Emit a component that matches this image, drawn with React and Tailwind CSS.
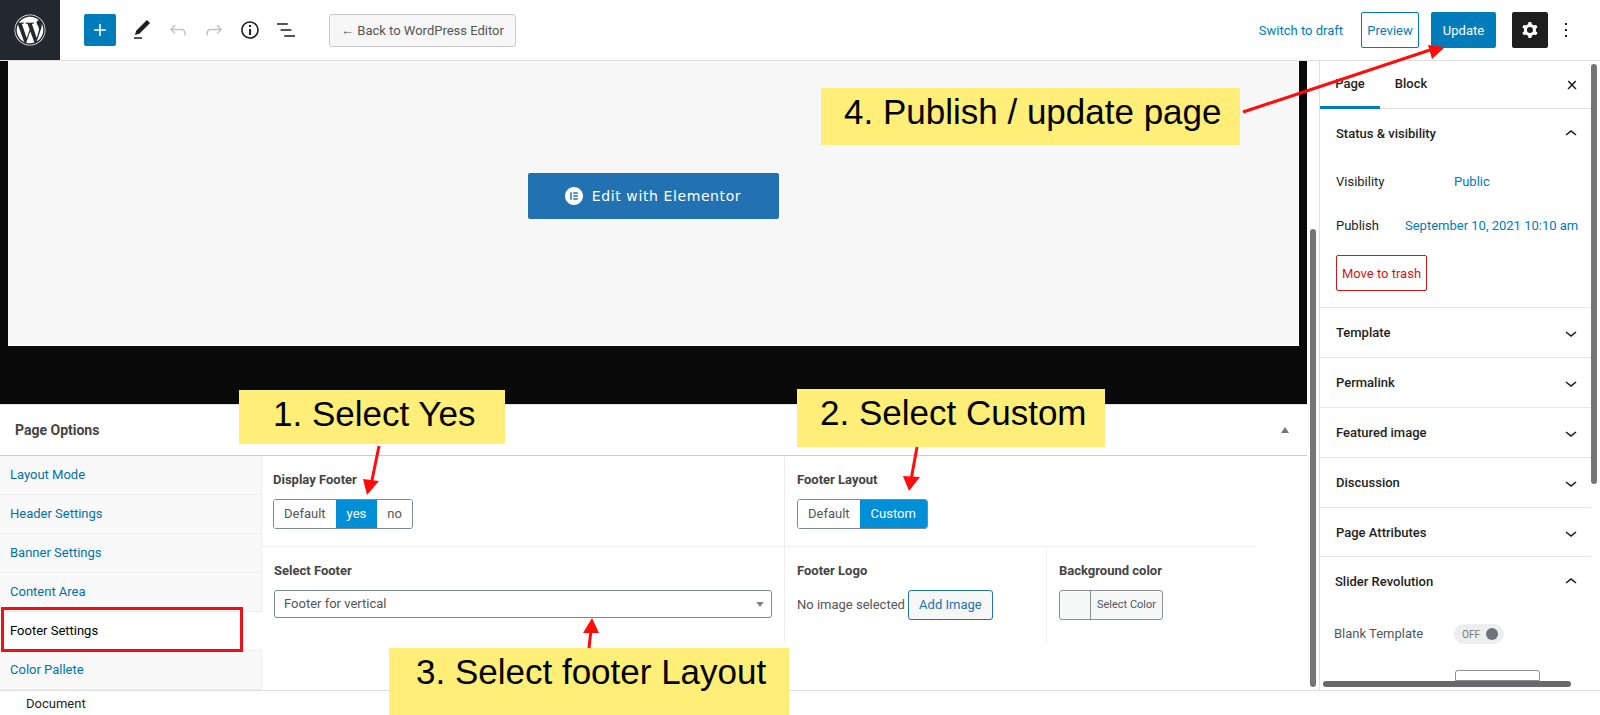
import { FaWordpress } from "react-icons/fa";
import { SiElementor } from "react-icons/si";

const WpIcon = ({ d, className = "", size = 24 }) => (
  <svg viewBox="0 0 24 24" width={size} height={size} className={className} fill="currentColor">
    <path d={d} fillRule="evenodd" />
  </svg>
);

const icons = {
  plus: "M18 11.2h-5.2V6h-1.6v5.2H6v1.6h5.2V18h1.6v-5.2H18z",
  pen: "M20.1 5.1L16.9 2 6.2 12.7l-1.3 4.4 4.5-1.3L20.1 5.1zM4 20.8h8v-1.5H4v1.5z",
  undo: "M18.3 11.7c-.6-.6-1.4-.9-2.3-.9H6.7l2.9-3.3-1.1-1-4.5 5L8.5 16l1-1-2.7-2.7H16c.5 0 .9.2 1.3.5 1 1 1 3.4 1 4.5v.3h1.5v-.2c0-1.5 0-4.3-1.5-5.7z",
  redo: "M15.6 6.5l-1.1 1 2.9 3.3H8c-.9 0-1.7.3-2.3.9-1.4 1.5-1.4 4.2-1.4 5.6v.2h1.5v-.3c0-1.1 0-3.5 1-4.5.3-.3.7-.5 1.3-.5h9.2L14.5 15l1.1 1.1 4.6-4.6-4.6-5z",
  info: "M12 3.2c-4.8 0-8.8 3.9-8.8 8.8 0 4.8 3.9 8.8 8.8 8.8 4.8 0 8.8-3.9 8.8-8.8 0-4.8-4-8.8-8.8-8.8zm0 16c-4 0-7.2-3.3-7.2-7.2C4.8 8 8 4.8 12 4.8s7.2 3.3 7.2 7.2c0 4-3.2 7.2-7.2 7.2zM11 17h2v-6h-2v6zm0-8h2V7h-2v2z",
  list: "M13.8 5.2H3v1.5h10.8V5.2zm-3.6 12v1.5H21v-1.5H10.2zm7.2-6H6.6v1.5h10.8v-1.5z",
  cog: "M10.289 4.836A1 1 0 0111.275 4h1.306a1 1 0 01.987.836l.244 1.466c.787.26 1.503.679 2.108 1.218l1.393-.522a1 1 0 011.216.437l.653 1.13a1 1 0 01-.23 1.273l-1.148.944a6.025 6.025 0 010 2.435l1.149.946a1 1 0 01.23 1.272l-.653 1.13a1 1 0 01-1.216.437l-1.394-.522c-.605.54-1.32.958-2.108 1.218l-.244 1.466a1 1 0 01-.987.836h-1.306a1 1 0 01-.986-.836l-.244-1.466a5.995 5.995 0 01-2.108-1.218l-1.394.522a1 1 0 01-1.217-.436l-.653-1.131a1 1 0 01.23-1.272l1.149-.946a6.026 6.026 0 010-2.435l-1.148-.944a1 1 0 01-.23-1.272l.653-1.131a1 1 0 011.217-.437l1.393.522a5.994 5.994 0 012.108-1.218l.244-1.466zM14.929 12a3 3 0 11-6 0 3 3 0 016 0z",
  more: "M13 19h-2v-2h2v2zm0-6h-2v-2h2v2zm0-6h-2V5h2v2z",
  close: "M13 11.9l3.3-3.4-1.1-1-3.2 3.3-3.2-3.3-1.1 1 3.3 3.4-3.5 3.6 1 1L12 13l3.5 3.5 1-1z",
  up: "M6.5 12.4L12 8l5.5 4.4-.9 1.2L12 10l-4.5 3.6-1-1.2z",
  down: "M17.5 11.6L12 16l-5.5-4.4.9-1.2L12 14l4.5-3.6 1 1.2z",
};

const Header = () => (
  <header className="h-[61px] shrink-0 flex items-center border-b border-[#e0e0e0] bg-white">
    <div className="w-[60px] h-[60px] bg-[#23282d] flex items-center justify-center text-white">
      <FaWordpress size={32} />
    </div>
    <button className="ml-6 w-8 h-8 rounded-[2px] bg-[#007cba] text-white flex items-center justify-center">
      <WpIcon d={icons.plus} />
    </button>
    <WpIcon d={icons.pen} className="ml-[14px] text-[#1e1e1e]" />
    <WpIcon d={icons.undo} className="ml-3 text-[#c4c4c4]" />
    <WpIcon d={icons.redo} className="ml-3 text-[#c4c4c4]" />
    <WpIcon d={icons.info} className="ml-3 text-[#1e1e1e]" />
    <WpIcon d={icons.list} className="ml-3 text-[#1e1e1e]" />
    <button className="ml-[31px] w-[187px] h-[33px] pt-px rounded-[3px] border border-[#c9c9c9] bg-[#f6f6f6] text-[13px] text-[#555] flex items-center justify-center">
      ← Back to WordPress Editor
    </button>
    <div className="ml-auto flex items-center">
      <span className="pt-[2px] text-[13px] text-[#007cba]">Switch to draft</span>
      <button className="ml-[18px] w-[58px] h-9 pt-[2px] rounded-[2px] border border-[#007cba] text-[13px] text-[#007cba]">Preview</button>
      <button className="ml-3 w-[65px] h-9 pt-[2px] rounded-[2px] bg-[#007cba] text-[13px] text-white">Update</button>
      <button className="ml-4 w-9 h-9 rounded-[2px] bg-[#1e1e1e] text-white flex items-center justify-center">
        <WpIcon d={icons.cog} />
      </button>
      <WpIcon d={icons.more} className="ml-[6px] mr-[22px] text-[#1e1e1e]" />
    </div>
  </header>
);

const Canvas = () => (
  <div className="h-[343px] bg-[#0a0a0a] px-2 shrink-0">
    <div className="h-[285px] bg-[#f7f7f7] border-r border-b border-white flex items-center justify-center pb-[14px]">
      <div className="w-[251px] h-[46px] rounded-[2px] bg-[#2271b1] text-white flex items-center justify-center gap-[9px] font-['DejaVu_Sans',sans-serif] text-[14px] tracking-[0.6px]">
        <SiElementor size={18} />
        <span>Edit with Elementor</span>
      </div>
    </div>
  </div>
);

const tabs = ["Layout Mode", "Header Settings", "Banner Settings", "Content Area", "Footer Settings", "Color Pallete"];

const Tabs = () => (
  <div className="w-[262px] shrink-0">
    {tabs.map((t) =>
      t === "Footer Settings" ? (
        <div key={t} className="h-[39px] bg-white border-b border-[#eeeeee] pl-[10px] pb-px flex items-center text-[13px] text-black">{t}</div>
      ) : (
        <div key={t} className="h-[39px] bg-[#f9f9f9] border-r border-b border-[#eeeeee] pl-[10px] flex items-center text-[13px] text-[#0073aa]">{t}</div>
      )
    )}
  </div>
);

const Label = ({ children }) => (
  <div className="text-[13px] leading-4 font-bold text-[#444]">{children}</div>
);

const Segmented = ({ items, active }) => (
  <div className="mt-[11px] inline-flex h-[30px] rounded-[3px] border border-[#7e8993] overflow-hidden text-[13px] text-[#555]">
    {items.map((i) => (
      <span
        key={i}
        className={i === active ? "px-[11px] flex items-center bg-[#008ed6] text-white" : "px-[10px] flex items-center bg-white"}
      >
        {i}
      </span>
    ))}
  </div>
);

const PageOptions = () => (
  <div className="flex-1 min-h-0 border-t border-[#e0e0e0] bg-white flex flex-col">
    <div className="h-[51px] shrink-0 border-b border-[#cccccc] flex items-center justify-between pl-[15px] pr-[18px]">
      <span className="text-[14px] font-bold text-[#444]">Page Options</span>
      <span className="w-0 h-0 border-x-[4px] border-x-transparent border-b-[6px] border-b-[#72777c]" />
    </div>
    <div className="flex flex-1 min-h-0 overflow-hidden">
      <Tabs />
      <div className="w-[993px]">
        <div className="flex h-[91px] border-b border-[#eeeeee]">
          <div className="w-[523px] border-r border-[#eeeeee] pl-[11px] pt-4">
            <Label>Display Footer</Label>
            <Segmented items={["Default", "yes", "no"]} active="yes" />
          </div>
          <div className="flex-1 pl-[12px] pt-4">
            <Label>Footer Layout</Label>
            <Segmented items={["Default", "Custom"]} active="Custom" />
          </div>
        </div>
        <div className="flex h-[96px]">
          <div className="w-[523px] border-r border-[#eeeeee] pl-[12px] pt-4">
            <Label>Select Footer</Label>
            <div className="mt-[11px] w-[498px] h-[28px] rounded-[3px] border border-[#7e8993] flex items-center justify-between pl-[9px] pr-[7px] text-[13px] text-[#555]">
              <span>Footer for vertical</span>
              <span className="w-0 h-0 border-x-[4px] border-x-transparent border-t-[5px] border-t-[#888]" />
            </div>
          </div>
          <div className="w-[262px] border-r border-[#eeeeee] pl-[12px] pt-4">
            <Label>Footer Logo</Label>
            <div className="mt-[11px] flex items-center gap-[3px] text-[13px] text-[#555]">
              <span>No image selected</span>
              <span className="w-[85px] h-[30px] rounded-[3px] border border-[#2271b1] bg-[#f6f7f7] text-[#2271b1] flex items-center justify-center">Add Image</span>
            </div>
          </div>
          <div className="flex-1 pl-3 pt-4">
            <Label>Background color</Label>
            <div className="mt-[11px] w-[104px] h-[30px] rounded-[3px] border border-[#8c8f94] bg-[#f6f7f7] flex text-[11px] text-[#50575e]">
              <span className="w-[31px] border-r border-[#8c8f94]" />
              <span className="flex-1 flex items-center justify-center">Select Color</span>
            </div>
          </div>
        </div>
      </div>
    </div>
  </div>
);

const collapsed = ["Template", "Permalink", "Featured image", "Discussion"];

const Sidebar = () => (
  <aside className="flex-1 border-l border-[#e0e0e0] bg-white text-[13px] text-[#1e1e1e] overflow-hidden">
    <div className="w-[271px]">
      <div className="flex h-[48px] border-b border-[#e0e0e0] items-stretch">
        <div className="w-[60px] flex items-center justify-center font-medium border-b-[3px] border-[#007cba] h-[48px]">Page</div>
        <div className="w-[62px] flex items-center justify-center font-medium pb-px">Block</div>
        <WpIcon d={icons.close} className="ml-auto mr-[7px] self-center" />
      </div>
      <div className="h-[199px] border-b border-[#e6e6e6] px-4">
        <div className="h-[50px] flex items-center justify-between font-medium">
          Status & visibility
          <WpIcon d={icons.up} className="-mr-[8px]" />
        </div>
        <div className="h-[44px] pt-[2px] flex items-center">
          <span className="w-[118px]">Visibility</span>
          <span className="text-[#007cba]">Public</span>
        </div>
        <div className="h-[44px] pt-[2px] flex items-center">
          <span className="w-[69px] shrink-0">Publish</span>
          <span className="text-[#007cba] whitespace-nowrap">September 10, 2021 10:10 am</span>
        </div>
        <div className="mt-[8px] pt-[2px] w-[91px] h-[36px] rounded-[2px] border border-[#cc1818] text-[#cc1818] flex items-center justify-center">Move to trash</div>
      </div>
      {collapsed.map((s) => (
        <div key={s} className="h-[50px] border-b border-[#e6e6e6] px-4 flex items-center justify-between font-medium">
          {s}
          <WpIcon d={icons.down} className="-mr-[8px]" />
        </div>
      ))}
      <div className="h-[49px] pt-px border-b border-[#e6e6e6] px-4 flex items-center justify-between font-medium">
        Page Attributes
        <WpIcon d={icons.down} className="-mr-[8px]" />
      </div>
      <div className="h-[50px] pl-[15px] pr-4 flex items-center justify-between font-medium">
        Slider Revolution
        <WpIcon d={icons.up} className="-mr-[8px]" />
      </div>
      <div className="mt-[13px] px-[14px] h-[28px] flex items-center text-[#50575e]">
        <span className="w-[120px]">Blank Template</span>
        <span className="w-[50px] h-5 rounded-full bg-[#eceeef] flex items-center justify-between pl-2 pr-[6px] text-[10px] text-[#777]">
          OFF
          <span className="w-3 h-3 rounded-full bg-[#6c7478]" />
        </span>
      </div>
      <div className="ml-[135px] mt-[22px] w-[85px] h-[11px] rounded-t-[3px] border border-[#8c8f94]" />
    </div>
  </aside>
);

const Note = ({ className, children }) => (
  <div className={`absolute bg-[#ffee78] text-black font-['Liberation_Sans',sans-serif] text-[35px] leading-none whitespace-nowrap ${className}`}>
    {children}
  </div>
);

// hand-placed annotation arrows, over the whole page
const Arrows = () => (
  <svg className="absolute inset-0 pointer-events-none" width="1600" height="715" viewBox="0 0 1600 715">
    <g stroke="#ff0d0d" strokeWidth="3" fill="#ff0d0d">
      <line x1="1243" y1="112" x2="1430" y2="50" />
      <line x1="379" y1="446" x2="371" y2="485" />
      <line x1="917" y1="447" x2="911" y2="480" />
      <line x1="589" y1="648" x2="591" y2="630" />
    </g>
    <g fill="#ff0d0d">
      <polygon points="1445,47 1428,45 1432,59" />
      <polygon points="367,495 363,479 379,481" />
      <polygon points="909,491 903,476 920,477" />
      <polygon points="592,618 583,633 599,633" />
    </g>
  </svg>
);

const App = () => (
  <div className="relative w-[1600px] h-[715px] overflow-hidden bg-white font-['Roboto',sans-serif] flex flex-col">
    <Header />
    <div className="flex h-[629px] shrink-0">
      <div className="w-[1319px] shrink-0 flex">
        <div className="w-[1307px] flex flex-col">
          <Canvas />
          <PageOptions />
        </div>
      </div>
      <Sidebar />
    </div>
    <footer className="flex-1 pt-[2px] border-t border-[#e0e0e0] pl-[26px] flex items-center text-[13px] text-[#1e1e1e]">Document</footer>

    {/* scrollbars */}
    <div className="absolute left-[1310px] top-[229px] w-[6px] h-[458px] rounded-full bg-[#757575]" />
    <div className="absolute left-[1591px] top-[64px] w-[6px] h-[420px] rounded-full bg-[#757575]" />
    <div className="absolute left-[1323px] top-[681px] w-[248px] h-[6px] rounded-full bg-[#696969]" />

    {/* annotations */}
    <div className="absolute left-[1px] top-[607px] w-[242px] h-[45px] border-[3px] border-[#f01018]" />
    <Note className="left-[821px] top-[88px] w-[419px] h-[57px] pl-[23px] pt-[6px]">4. Publish / update page</Note>
    <Note className="left-[239px] top-[390px] w-[266px] h-[54px] pl-[34px] pt-[6px]">1. Select Yes</Note>
    <Note className="left-[797px] top-[389px] w-[308px] h-[58px] pl-[23px] pt-[6px]">2. Select Custom</Note>
    <Note className="left-[389px] top-[648px] w-[400px] h-[67px] pl-[27px] pt-[6px]">3. Select footer Layout</Note>
    <Arrows />
  </div>
);

export default App;
